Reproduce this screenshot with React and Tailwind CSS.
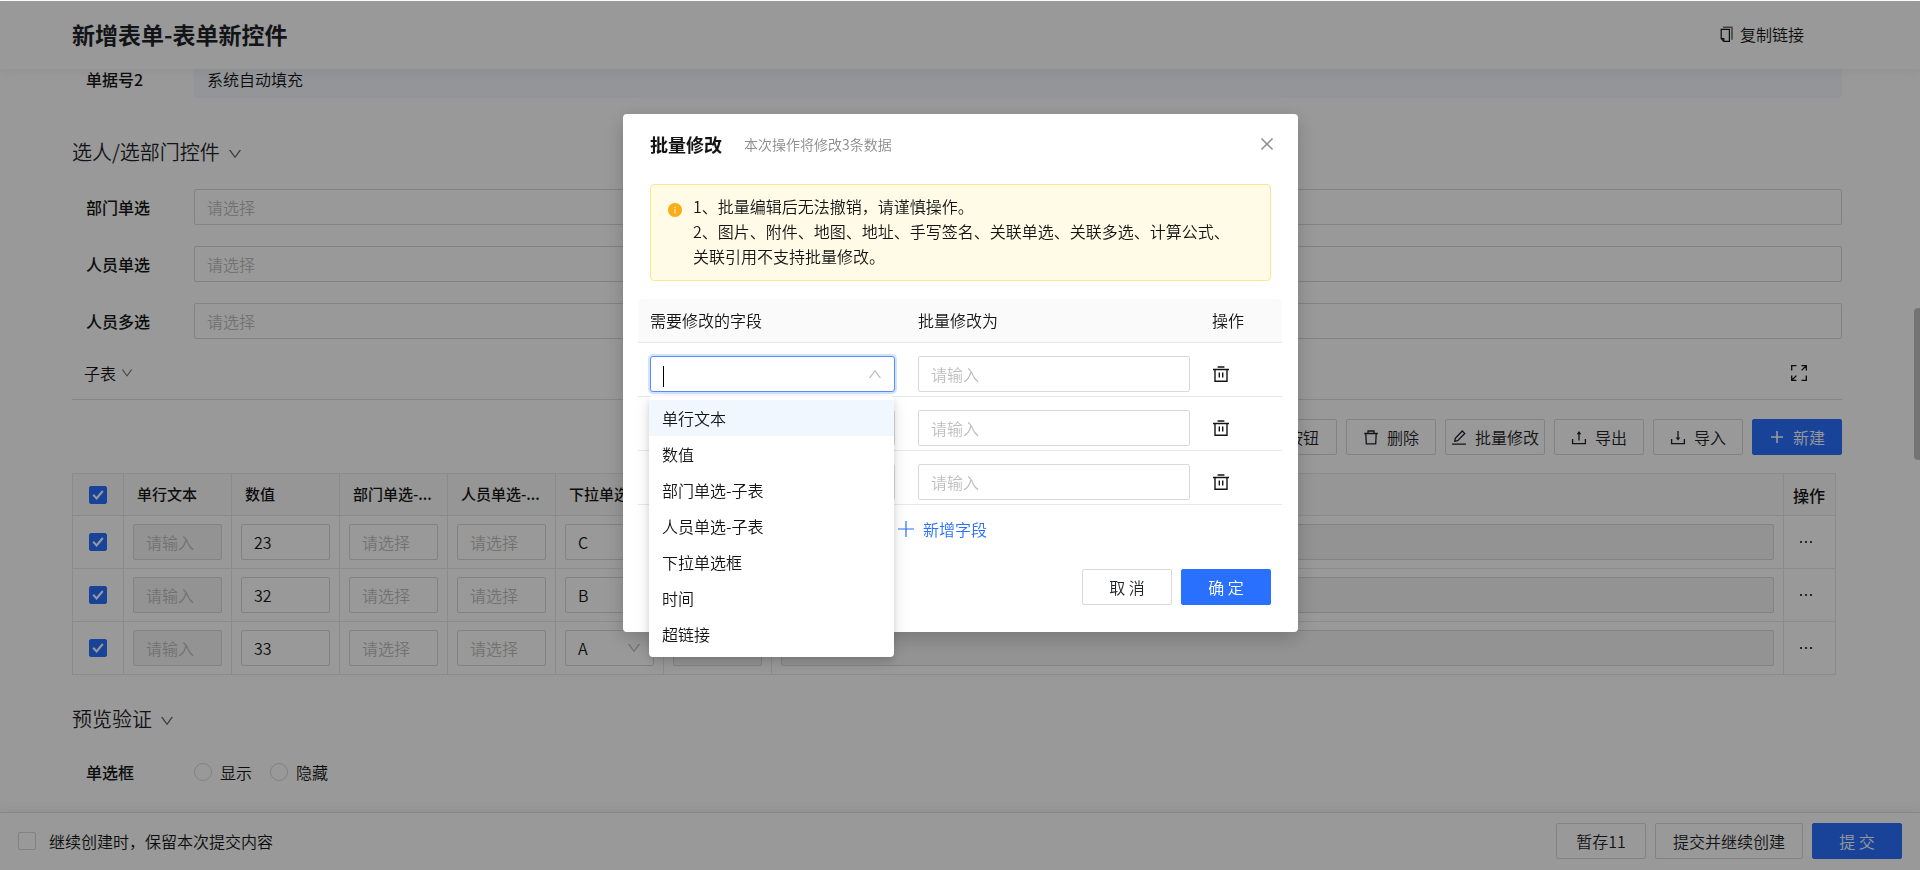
import React from "react";
import { AiOutlineDown, AiOutlineUp, AiOutlineClose, AiFillInfoCircle } from "react-icons/ai";

const placeholder = "placeholder:text-[#bfbfbf]";

function Svg({ size = 16, className = "", children }) {
  return (
    <svg
      width={size}
      height={size}
      viewBox="0 0 16 16"
      fill="none"
      stroke="currentColor"
      strokeWidth="1.3"
      className={className}
      aria-hidden="true"
    >
      {children}
    </svg>
  );
}

const TrashIcon = () => (
  <Svg>
    <path d="M1.2 4.5h13.6M5 4.3V2h6v2.3M2.8 4.7l.5 10.2h9.4l.5-10.2" />
  </Svg>
);
const EditIcon = () => (
  <Svg>
    <path d="M1 15.2h14M3.8 12.2l.5-3 7-7.2 2.4 2.4-7 7.2z" />
  </Svg>
);
const ExportIcon = () => (
  <Svg>
    <path d="M1.6 10v4.6h12.8V10M8 11.4V4" />
    <path d="M8 2l2.3 3.2H5.7z" fill="currentColor" stroke="none" />
  </Svg>
);
const ImportIcon = () => (
  <Svg>
    <path d="M1.6 10v4.6h12.8V10M8 2v7" />
    <path d="M8 11.6l2.3-3.2H5.7z" fill="currentColor" stroke="none" />
  </Svg>
);
const PlusIcon = ({ thin }) => (
  <Svg>
    <path d={thin ? "M8 0v16M0 8h16" : "M8 2v12M2 8h12"} strokeWidth={thin ? 1.2 : 1.6} />
  </Svg>
);
const CopyIcon = () => (
  <Svg>
    <path d="M2.2 3.4h8.2v12H4.8L2.2 12.6zM2.2 12.6h2.6v2.8" strokeWidth="1.2" />
    <path d="M4 1.2h9v12.6" strokeWidth="1.6" opacity="0.6" />
  </Svg>
);
const ExpandIcon = () => (
  <Svg>
    <path d="M.7 5.5V.7h4.8M10.5.7h4.8v4.8M15 1l-4.4 4.4M.7 10.5v4.8h4.8M1 15l4.4-4.4M15.3 10.5v4.8h-4.8" />
  </Svg>
);
const BinIcon = () => (
  <Svg>
    <path d="M0 3.5h16M4.6 1h6.8M2 3.5v11.8h12V3.5M6.3 6.6v5M9.7 6.6v5" strokeWidth="1.4" />
  </Svg>
);

function Button({ primary, icon, children }) {
  const tone = primary
    ? "border-[#2970ff] bg-[#2970ff] text-white"
    : "border-[#d9d9d9] bg-white text-[#1f2329]";
  return (
    <button
      type="button"
      className={`flex h-9 min-w-[90px] items-center justify-center gap-2 whitespace-nowrap rounded-xs border pb-px ${
        icon ? "px-[5px]" : "px-[17px]"
      } ${tone}`}
    >
      {icon}
      {children}
    </button>
  );
}

function Check({ checked, label, id }) {
  return (
    <span className="relative flex size-[18px] shrink-0">
      <input
        id={id}
        type="checkbox"
        defaultChecked={checked}
        aria-label={label}
        className="peer size-[18px] appearance-none rounded-xs border border-[#d9d9d9] bg-white checked:border-[#2970ff] checked:bg-[#2970ff]"
      />
      <svg
        viewBox="0 0 18 18"
        className="pointer-events-none absolute inset-0 hidden peer-checked:block"
        fill="none"
        stroke="white"
        strokeWidth="2"
        aria-hidden="true"
      >
        <path d="M4.2 8.8l3.4 3.6L13.8 5" />
      </svg>
    </span>
  );
}

function SectionTitle({ children }) {
  return (
    <h2 className="flex h-8 items-center gap-[7px] text-[20px] text-[#1f2329]">
      {children}
      <AiOutlineDown className="mt-1 size-4 text-[#666]" />
    </h2>
  );
}

function Field({ id, label }) {
  return (
    <div className="flex items-center pl-[14px]">
      <label htmlFor={id} className="w-[108px] shrink-0 pb-px font-medium">
        {label}
      </label>
      <input
        id={id}
        placeholder="请选择"
        className={`h-9 min-w-0 flex-1 rounded-xs border border-[#d9d9d9] bg-white px-3 pb-px ${placeholder}`}
      />
    </div>
  );
}

const rows = [
  { number: "23", option: "C" },
  { number: "32", option: "B" },
  { number: "33", option: "A" },
];
const columns = ["单行文本", "数值", "部门单选-...", "人员单选-...", "下拉单选", "时间"];
const cellInput = `block h-9 w-full rounded-xs border border-[#d9d9d9] bg-white px-3 disabled:bg-[#f5f5f5] ${placeholder}`;
const cell = "border border-[#e8e8e8]";

function SubTable() {
  return (
    <div className="pr-[6px]">
      <table className="w-full table-fixed border-collapse">
        <colgroup>
          <col className="w-[51px]" />
          {columns.map((c) => (
            <col key={c} className="w-[108px]" />
          ))}
          <col />
          <col className="w-[52px]" />
        </colgroup>
        <thead className="bg-[#fafafa]">
          <tr className="h-[42px]">
            <th className={cell}>
              <div className="flex justify-center">
                <Check checked label="全选" />
              </div>
            </th>
            {columns.map((c) => (
              <th key={c} className={`${cell} whitespace-nowrap px-[13px] pb-px text-left text-[15px] font-medium`}>
                {c}
              </th>
            ))}
            <th className={`${cell} px-[13px] text-left text-[15px] font-medium`}>超链接</th>
            <th className={`${cell} pl-[9px] text-left font-medium`}>操作</th>
          </tr>
        </thead>
        <tbody>
          {rows.map((r, i) => (
            <tr key={r.number} className="h-[53px]">
              <td className={cell}>
                <div className="flex justify-center">
                  <Check checked label={`选择第${i + 1}行`} />
                </div>
              </td>
              <td className={`${cell} px-[9px]`}>
                <input disabled aria-label="单行文本" placeholder="请输入" className={cellInput} />
              </td>
              <td className={`${cell} px-[9px]`}>
                <input aria-label="数值" defaultValue={r.number} className={cellInput} />
              </td>
              <td className={`${cell} px-[9px]`}>
                <input aria-label="部门单选" placeholder="请选择" className={cellInput} />
              </td>
              <td className={`${cell} px-[9px]`}>
                <input aria-label="人员单选" placeholder="请选择" className={cellInput} />
              </td>
              <td className={`${cell} px-[9px]`}>
                <div className="relative">
                  <select aria-label="下拉单选框" defaultValue={r.option} className={`${cellInput} appearance-none`}>
                    <option>A</option>
                    <option>B</option>
                    <option>C</option>
                  </select>
                  <AiOutlineDown className="pointer-events-none absolute top-[10px] right-3 size-4 text-[#bfbfbf]" />
                </div>
              </td>
              <td className={`${cell} px-[9px]`}>
                <input disabled aria-label="时间" className={cellInput} />
              </td>
              <td className={`${cell} px-[9px]`}>
                <input disabled aria-label="超链接" className={cellInput} />
              </td>
              <td className={`${cell} pl-[14px]`}>
                <button type="button" aria-label="更多操作" className="block">
                  <svg width="16" height="16" viewBox="0 0 16 16" fill="currentColor" aria-hidden="true">
                    <circle cx="3" cy="8" r="1.1" />
                    <circle cx="8" cy="8" r="1.1" />
                    <circle cx="13" cy="8" r="1.1" />
                  </svg>
                </button>
              </td>
            </tr>
          ))}
        </tbody>
      </table>
    </div>
  );
}

function Page() {
  return (
    <div className="flex h-screen flex-col overflow-hidden pt-px">
      <header className="z-10 flex h-[68px] shrink-0 items-center justify-between bg-white pr-[116px] pb-[3px] pl-[72px] shadow-[0_2px_12px_rgba(0,0,0,0.06)]">
        <h1 className="text-[23px] font-bold text-[#1f2329]">新增表单-表单新控件</h1>
        <button type="button" className="flex items-center gap-[5px]">
          <CopyIcon />
          复制链接
        </button>
      </header>

      <div className="relative min-h-0 flex-1 overflow-hidden">
        <main className="pr-[78px] pl-[72px]">
          <div className="flex h-[29px] pl-[14px]">
            <span className="w-[108px] shrink-0 font-medium leading-5">单据号2</span>
            <div className="flex-1 rounded-b bg-[#f5f8ff] px-[13px] leading-5">系统自动填充</div>
          </div>

          <div className="mt-[38px]">
            <SectionTitle>选人/选部门控件</SectionTitle>
          </div>
          <div className="mt-[21px] flex flex-col gap-[21px]">
            <Field id="dept" label="部门单选" />
            <Field id="person" label="人员单选" />
            <Field id="people" label="人员多选" />
          </div>

          <div className="mt-[9px] flex h-[52px] items-center justify-between border-b border-[#e0e0e0] pr-[35px] pb-[2px] pl-3">
            <h3 className="flex items-center gap-1">
              子表
              <AiOutlineDown className="size-[14px] text-[#777]" />
            </h3>
            <button type="button" aria-label="全屏">
              <ExpandIcon />
            </button>
          </div>

          <div className="mt-[19px] flex justify-end gap-[9px]">
            <Button>自定义按钮</Button>
            <Button icon={<TrashIcon />}>删除</Button>
            <Button icon={<EditIcon />}>批量修改</Button>
            <Button icon={<ExportIcon />}>导出</Button>
            <Button icon={<ImportIcon />}>导入</Button>
            <Button primary icon={<PlusIcon />}>新建</Button>
          </div>

          <div className="mt-[18px]">
            <SubTable />
          </div>

          <div className="mt-7">
            <SectionTitle>预览验证</SectionTitle>
          </div>
          <fieldset className="mt-[25px] flex items-center pl-[14px]">
            <legend className="float-left w-[108px] font-medium">单选框</legend>
            <div className="flex items-center gap-[18px]">
              {["显示", "隐藏"].map((t) => (
                <label key={t} className="flex items-center gap-2">
                  <input
                    type="radio"
                    name="display"
                    className="size-[18px] appearance-none rounded-full border border-[#d9d9d9] bg-white"
                  />
                  {t}
                </label>
              ))}
            </div>
          </fieldset>
        </main>
        <div className="absolute top-[239px] right-0 h-[152px] w-[6px] rounded-l bg-[#c1c1c1]" />
      </div>

      <footer className="z-10 flex h-[58px] shrink-0 items-center justify-between border-t border-[#e0e0e0] bg-white px-[18px] pb-px shadow-[0_-2px_10px_rgba(0,0,0,0.06)]">
        <div className="flex items-center gap-[13px]">
          <Check id="keep" />
          <label htmlFor="keep" className="pb-px">继续创建时，保留本次提交内容</label>
        </div>
        <div className="flex gap-[9px]">
          <Button>暂存11</Button>
          <Button>提交并继续创建</Button>
          <Button primary>提 交</Button>
        </div>
      </footer>
    </div>
  );
}

const fieldOptions = ["单行文本", "数值", "部门单选-子表", "人员单选-子表", "下拉单选框", "时间", "超链接"];

function FieldSelect({ open }) {
  return (
    <div className="relative h-9">
      <input
        role="combobox"
        aria-expanded={!!open}
        aria-controls="field-options"
        aria-label="需要修改的字段"
        className={`block h-9 w-full border bg-white px-3 outline-none ${
          open
            ? "rounded-[3px] border-[#5290ff] shadow-[0_0_0_2px_rgba(41,112,255,0.2)]"
            : "rounded-xs border-[#d9d9d9]"
        }`}
      />
      {open && <span className="absolute top-[10px] left-[13px] h-[21px] w-px bg-black" />}
      {open ? (
        <AiOutlineUp className="pointer-events-none absolute top-[10px] right-3 size-4 text-[#bfbfbf]" />
      ) : (
        <AiOutlineDown className="pointer-events-none absolute top-[10px] right-3 size-4 text-[#bfbfbf]" />
      )}
      {open && (
        <ul
          id="field-options"
          role="listbox"
          className="absolute top-10 -left-px z-10 w-full rounded bg-white pt-1 pb-[5px] shadow-[0_6px_16px_rgba(0,0,0,0.12),0_3px_6px_rgba(0,0,0,0.1)]"
        >
          {fieldOptions.map((o, i) => (
            <li
              key={o}
              role="option"
              aria-selected={i === 0}
              className="flex h-9 items-center px-[13px] pb-px aria-selected:bg-[#f0f7ff]"
            >
              {o}
            </li>
          ))}
        </ul>
      )}
    </div>
  );
}

function Dialog() {
  return (
    <div className="fixed inset-x-0 top-px bottom-0 z-20 flex items-start justify-center overflow-hidden bg-black/40 pt-[113px] pl-px">
      <section
        role="dialog"
        aria-labelledby="dialog-title"
        className="w-[675px] rounded bg-white shadow-[0_6px_20px_rgba(0,0,0,0.2)]"
      >
        <div className="flex h-[61px] items-center px-[27px] pb-px">
          <h2 id="dialog-title" className="text-[18px] font-bold">批量修改</h2>
          <p className="ml-[22px] flex-1 text-[14px] text-[#8c8c8c]">本次操作将修改3条数据</p>
          <button type="button" aria-label="关闭" className="-mr-[5px] text-[#8c8c8c]">
            <AiOutlineClose className="size-[18px]" />
          </button>
        </div>

        <div className="mx-[27px] mt-[9px] flex gap-[10px] rounded border border-[#ffe58f] bg-[#fffbe6] pt-[9px] pb-[11px] pl-4">
          <AiFillInfoCircle className="mt-2 size-4 shrink-0 text-[#faad14]" />
          <p className="leading-[25px]">
            1、批量编辑后无法撤销，请谨慎操作。
            <br />
            2、图片、附件、地图、地址、手写签名、关联单选、关联多选、计算公式、
            <br />
            关联引用不支持批量修改。
          </p>
        </div>

        <div className="mt-[18px] mr-4 ml-[15px]">
          <table className="w-full table-fixed border-separate border-spacing-0">
            <colgroup>
              <col className="w-[268px]" />
              <col />
              <col className="w-[82px]" />
            </colgroup>
            <thead>
              <tr className="h-11 text-left">
                <th className="rounded-tl border-b border-[#e8e8e8] bg-[#fafafa] px-3 pb-[2px] font-[350]">需要修改的字段</th>
                <th className="border-b border-[#e8e8e8] bg-[#fafafa] px-3 pb-[2px] font-[350]">批量修改为</th>
                <th className="rounded-tr border-b border-[#e8e8e8] bg-[#fafafa] px-3 pb-[2px] font-[350]">操作</th>
              </tr>
            </thead>
            <tbody>
              {[0, 1, 2].map((i) => (
                <tr key={i}>
                  <td className="border-b border-[#e8e8e8] pt-[13px] pr-[11px] pb-1 pl-3">
                    <FieldSelect open={i === 0} />
                  </td>
                  <td className="border-b border-[#e8e8e8] pt-[13px] pr-[10px] pb-1 pl-3">
                    <input
                      aria-label="批量修改为"
                      placeholder="请输入"
                      className={`block h-9 w-full rounded-xs border border-[#d9d9d9] px-3 ${placeholder}`}
                    />
                  </td>
                  <td className="border-b border-[#e8e8e8] pt-[13px] pb-1 pl-[13px]">
                    <button type="button" aria-label="删除" className="flex h-9 items-center">
                      <BinIcon />
                    </button>
                  </td>
                </tr>
              ))}
            </tbody>
          </table>
          <div className="flex justify-center pt-3 pr-[35px]">
            <button type="button" className="flex h-6 items-center gap-[9px] text-[#2970ff]">
              <PlusIcon thin />
              新增字段
            </button>
          </div>
        </div>

        <div className="mt-7 flex justify-end gap-[9px] px-[27px] pb-[27px]">
          <Button>取 消</Button>
          <Button primary>确 定</Button>
        </div>
      </section>
    </div>
  );
}

export default function App() {
  return (
    <div className="bg-white font-['Noto_Sans_CJK_SC',sans-serif] text-[16px] leading-6 font-[350] text-[#141414]">
      <Page />
      <Dialog />
    </div>
  );
}
